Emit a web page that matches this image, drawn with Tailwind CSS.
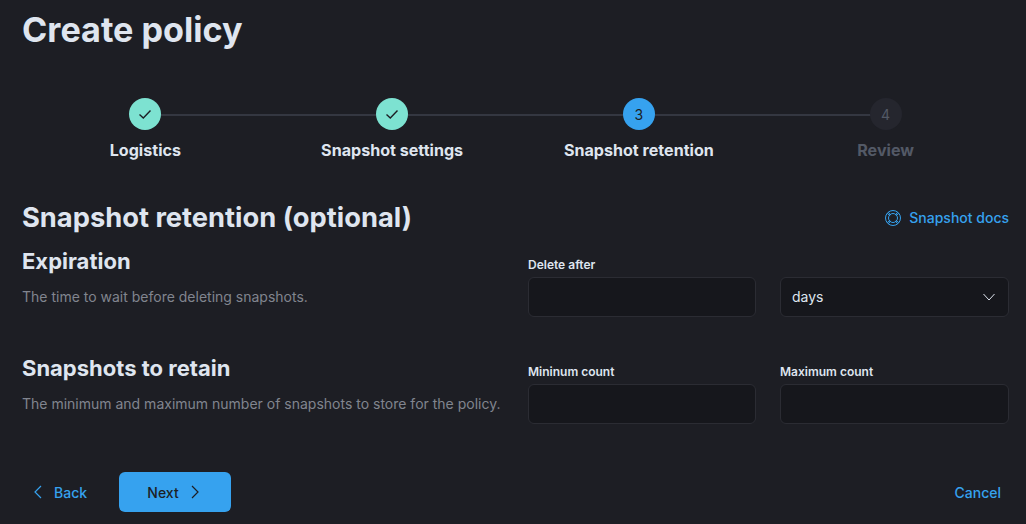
<!DOCTYPE html>
<html lang="en">
<head>
    <meta charset="UTF-8">
    <title>Create policy</title>
    <script src="https://cdn.jsdelivr.net/npm/@tailwindcss/browser@4"></script>
</head>
<body class="bg-[#1d1e24] font-['Inter',sans-serif] h-[524px] w-[1026px] overflow-hidden">
    <div class="pl-[22px] pr-[17px]">
        <h1 class="text-[34.2px] leading-[40px] pt-[10px] font-bold text-[#dfe5ef]">Create policy</h1>

        <!-- Steps -->
        <div class="grid grid-cols-4 mt-[48px]">
            <div class="relative flex flex-col items-center">
                <div class="absolute top-[16px] left-1/2 w-full h-[2px] bg-[#343741]"></div>
                <div class="relative w-8 h-8 rounded-full bg-[#7de2d1] flex items-center justify-center">
                    <svg class="w-4 h-4" viewBox="0 0 16 16" fill="none" stroke="#1d1e24" stroke-width="1.4"><path d="M2.5 8.5l3.8 3.5 7.2-7.5"/></svg>
                </div>
                <div class="mt-[10px] text-[16.1px] leading-[20px] font-bold text-[#dfe5ef]">Logistics</div>
            </div>
            <div class="relative flex flex-col items-center">
                <div class="absolute top-[16px] left-1/2 w-full h-[2px] bg-[#343741]"></div>
                <div class="relative w-8 h-8 rounded-full bg-[#7de2d1] flex items-center justify-center">
                    <svg class="w-4 h-4" viewBox="0 0 16 16" fill="none" stroke="#1d1e24" stroke-width="1.4"><path d="M2.5 8.5l3.8 3.5 7.2-7.5"/></svg>
                </div>
                <div class="mt-[10px] text-[16.1px] leading-[20px] font-bold text-[#dfe5ef]">Snapshot settings</div>
            </div>
            <div class="relative flex flex-col items-center">
                <div class="absolute top-[16px] left-1/2 w-full h-[2px] bg-[#343741]"></div>
                <div class="relative w-8 h-8 rounded-full bg-[#36a2ef] flex items-center justify-center text-[14px] text-[#1d1e24]">3</div>
                <div class="mt-[10px] text-[16.1px] leading-[20px] font-bold text-[#dfe5ef]">Snapshot retention</div>
            </div>
            <div class="relative flex flex-col items-center">
                <div class="relative w-8 h-8 rounded-full bg-[#25262e] flex items-center justify-center text-[14px] text-[#535966]">4</div>
                <div class="mt-[10px] text-[16.1px] leading-[20px] font-bold text-[#535966]">Review</div>
            </div>
        </div>

        <!-- Section header -->
        <div class="flex justify-between items-center mt-[38px]">
            <h2 class="text-[27.3px] leading-[40px] font-bold text-[#dfe5ef]">Snapshot retention (optional)</h2>
            <a href="#" class="flex items-center gap-2 -mt-px text-[14px] font-medium text-[#36a2ef]">
                <svg class="w-4 h-4" viewBox="0 0 16 16" fill="none" stroke="#36a2ef" stroke-width="1">
                    <circle cx="8" cy="8" r="7.5"/><circle cx="8" cy="8" r="4.5"/>
                    <path d="M2.2 3.4l2.9 2.2M3.4 2.2l2.2 2.9M13.8 3.4l-2.9 2.2M12.6 2.2l-2.2 2.9M2.2 12.6l2.9-2.2M3.4 13.8l2.2-2.9M13.8 12.6l-2.9-2.2M12.6 13.8l-2.2-2.9"/>
                </svg>
                Snapshot docs
            </a>
        </div>

        <!-- Expiration -->
        <div class="flex mt-[7px]">
            <div class="w-[506px]">
                <h3 class="text-[22px] leading-[32px] font-bold text-[#dfe5ef]">Expiration</h3>
                <p class="mt-[10px] text-[14px] leading-[20px] text-[#81858f]">The time to wait before deleting snapshots.</p>
            </div>
            <div class="grid grid-cols-[228px_229px] gap-x-6">
                <div>
                    <label class="block mt-[12px] mb-[4px] text-[12px] leading-[16px] font-semibold text-[#dfe5ef]">Delete after</label>
                    <input type="text" class="w-full h-10 bg-[#16171c] border border-[#2b2c33] rounded-md">
                </div>
                <div class="pt-[32px]">
                    <div class="h-10 px-[11px] bg-[#16171c] border border-[#2b2c33] rounded-md flex items-center justify-between text-[14px] text-[#dfe5ef]">
                        <span class="-mt-px">days</span>
                        <svg class="w-4 h-4" viewBox="0 0 16 16" fill="none" stroke="#dfe5ef" stroke-width="1"><path d="M2.5 5L8 11l5.5-6"/></svg>
                    </div>
                </div>
            </div>
        </div>

        <!-- Retain -->
        <div class="flex mt-[35px]">
            <div class="w-[506px]">
                <h3 class="text-[22px] leading-[32px] font-bold text-[#dfe5ef]">Snapshots to retain</h3>
                <p class="mt-[10px] text-[14px] leading-[20px] text-[#81858f]">The minimum and maximum number of snapshots to store for the policy.</p>
            </div>
            <div class="grid grid-cols-[228px_229px] gap-x-6">
                <div>
                    <label class="block mt-[12px] mb-[4px] text-[12px] leading-[16px] font-semibold text-[#dfe5ef]">Mininum count</label>
                    <input type="text" class="w-full h-10 bg-[#16171c] border border-[#2b2c33] rounded-md">
                </div>
                <div>
                    <label class="block mt-[12px] mb-[4px] text-[12px] leading-[16px] font-semibold text-[#dfe5ef]">Maximum count</label>
                    <input type="text" class="w-full h-10 bg-[#16171c] border border-[#2b2c33] rounded-md">
                </div>
            </div>
        </div>

        <!-- Footer -->
        <div class="flex items-center justify-between mt-[48px]">
            <div class="flex items-center">
                <a href="#" class="flex items-center gap-2 pl-[8px] w-[97px] text-[14px] font-medium text-[#36a2ef]">
                    <svg class="w-4 h-4" viewBox="0 0 16 16" fill="none" stroke="#36a2ef" stroke-width="1.2"><path d="M11 2L5 8l6 6"/></svg>
                    Back
                </a>
                <button class="h-10 w-[112px] rounded-md bg-[#36a2ef] text-[#1d1e24] text-[14px] font-medium flex items-center justify-center gap-2">
                    Next
                    <svg class="w-4 h-4" viewBox="0 0 16 16" fill="none" stroke="#1d1e24" stroke-width="1.2"><path d="M5 2l6 6-6 6"/></svg>
                </button>
            </div>
            <a href="#" class="pr-[8px] text-[14px] font-medium text-[#36a2ef]">Cancel</a>
        </div>
    </div>
</body>
</html>
